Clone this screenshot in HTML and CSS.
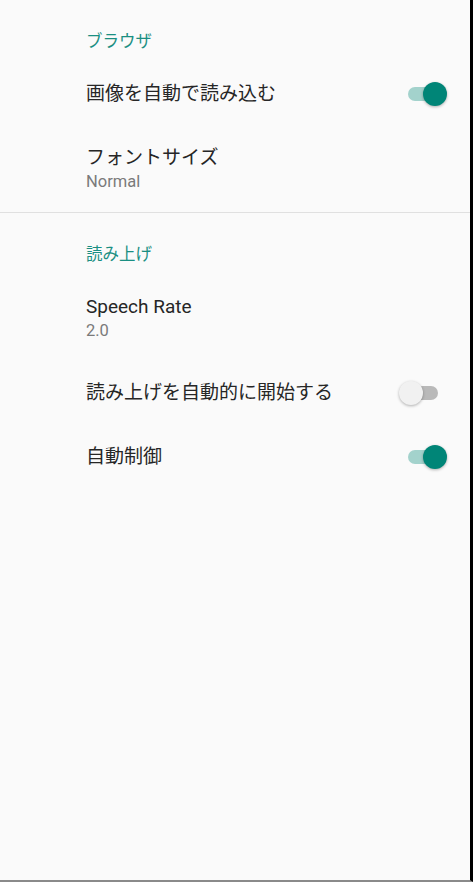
FILE: index.html
```html
<!DOCTYPE html>
<html lang="ja">

<head>
    <meta charset="UTF-8">
    <meta name="viewport" content="width=device-width, initial-scale=1.0">
    <title>設定</title>
    <link rel="stylesheet" href="styles.css">
</head>

<body>
    <div class="screen">
        <div class="category">ブラウザ</div>

        <div class="pref">
            <div class="pref-text">
                <div class="pref-title">画像を自動で読み込む</div>
            </div>
            <div class="switch on"><span class="track"></span><span class="thumb"></span></div>
        </div>

        <div class="pref two-line">
            <div class="pref-text">
                <div class="pref-title">フォントサイズ</div>
                <div class="pref-summary">Normal</div>
            </div>
        </div>

        <div class="divider"></div>

        <div class="category">読み上げ</div>

        <div class="pref two-line">
            <div class="pref-text">
                <div class="pref-title">Speech Rate</div>
                <div class="pref-summary">2.0</div>
            </div>
        </div>

        <div class="pref">
            <div class="pref-text">
                <div class="pref-title">読み上げを自動的に開始する</div>
            </div>
            <div class="switch"><span class="track"></span><span class="thumb"></span></div>
        </div>

        <div class="pref">
            <div class="pref-text">
                <div class="pref-title">自動制御</div>
            </div>
            <div class="switch on"><span class="track"></span><span class="thumb"></span></div>
        </div>
    </div>
</body>

</html>
```

FILE: styles.css
```css
body {
    margin: 0;
    background-color: #000;
    font-family: Roboto, "Noto Sans CJK JP", sans-serif;
}

.screen {
    box-sizing: border-box;
    width: 473px;
    height: 882px;
    background-color: #fafafa;
    border-right: 3px solid #000;
    border-bottom: 2px solid #8a8a8a;
    overflow: hidden;
}

.category {
    padding: 32px 0 10px 86px;
    font-size: 16.5px;
    line-height: 20px;
    color: #1a8f82;
}

.pref {
    display: flex;
    align-items: center;
    height: 64px;
    padding: 0 23px 0 86px;
}

.pref.two-line {
    height: 86px;
    box-sizing: border-box;
    padding-top: 20px;
    padding-bottom: 18px;
    align-items: flex-start;
}

.pref-text {
    flex: 1;
}

.pref-title {
    font-size: 19px;
    line-height: 24px;
    color: #262626;
}

.pref-summary {
    font-size: 16.5px;
    line-height: 24px;
    color: #7a7a7a;
}

.divider {
    height: 1px;
    background-color: #e0e0e0;
}

/* switch: track 30x14, thumb 24 overhanging 9px each side */
.switch {
    position: relative;
    width: 48px;
    height: 24px;
}

.switch .track {
    position: absolute;
    left: 9px;
    top: 5px;
    width: 30px;
    height: 14px;
    border-radius: 7px;
    background-color: #b9b9b9;
}

.switch .thumb {
    position: absolute;
    left: 0;
    top: 0;
    width: 24px;
    height: 24px;
    border-radius: 50%;
    background-color: #f1f1f1;
    box-shadow: 0 1px 3px rgba(0, 0, 0, 0.3);
}

.switch.on .track {
    background-color: #a3d2cc;
}

.switch.on .thumb {
    left: 24px;
    background-color: #008577;
}
```
